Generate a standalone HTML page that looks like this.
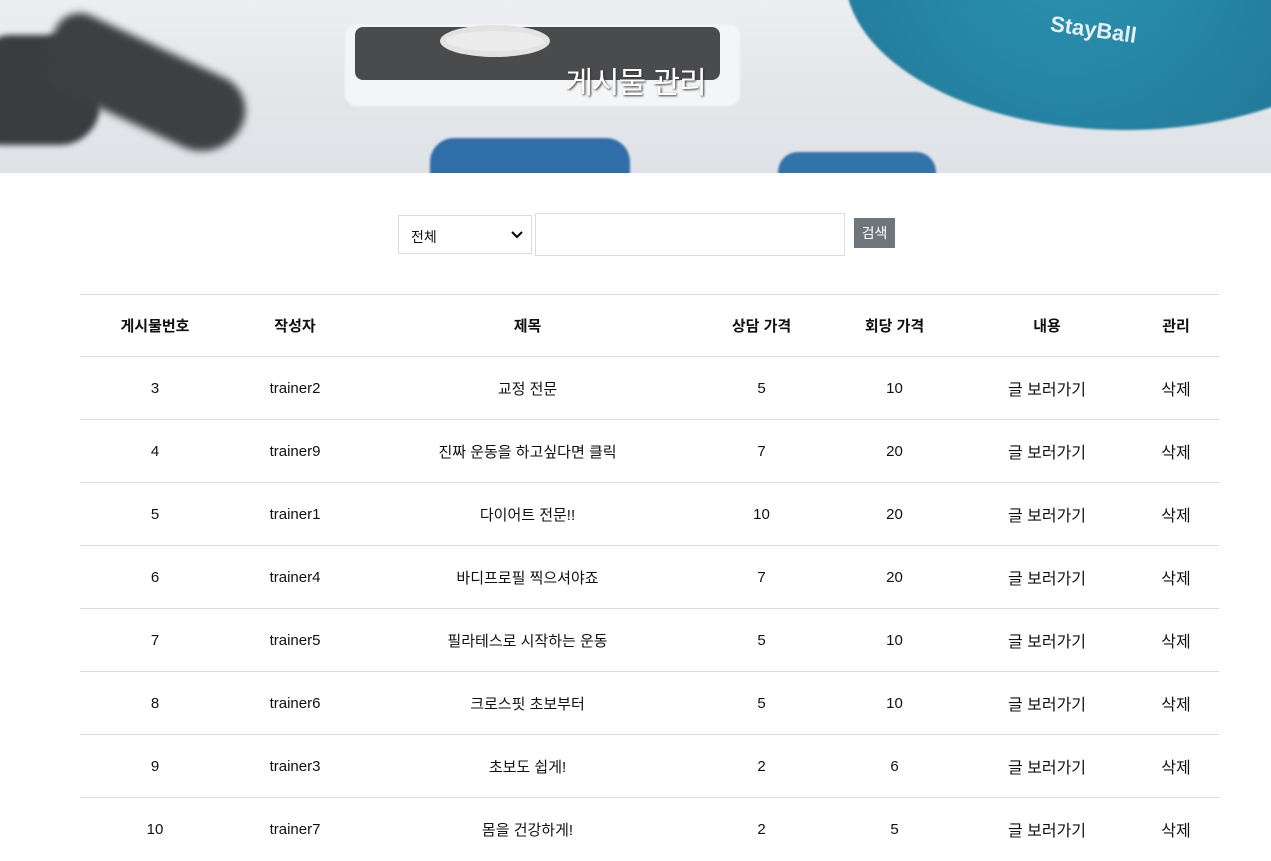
<!DOCTYPE html>
<html><head><meta charset="utf-8"><style>
*{margin:0;padding:0;box-sizing:border-box}
body{width:1271px;height:849px;overflow:hidden;background:#fff;font-family:"Liberation Sans","Noto Sans CJK KR",sans-serif;color:#111}
.hero{position:relative;height:173px;background:linear-gradient(180deg,#eceef0 0%,#e4e7ea 50%,#dfe2e6 100%);overflow:hidden}
.hero div{position:absolute}
.title{position:absolute;left:0;right:0;top:58px;text-align:center;color:#fff;font-size:30px;text-shadow:1px 1px 2px #333;letter-spacing:-1px}
.search{position:absolute;top:213px;left:398px}
.sel{position:absolute;left:0;top:2px;width:134px;height:39px;border:1px solid #ddd;font-size:14px;padding:11px 12px}
.sel svg{position:absolute;right:8px;top:15px}
.inp{position:absolute;left:137px;top:0;width:310px;height:43px;border:1px solid #ddd}
.btn{position:absolute;left:456px;top:5px;width:41px;height:30px;background:#70757c;color:#fff;font-size:14px;text-align:center;line-height:30px}
table{position:absolute;top:294px;left:80px;width:1139px;border-collapse:collapse}
td,th{border-top:1px solid #ddd;text-align:center;height:63px;font-size:15px;font-weight:normal}
th{font-weight:bold;height:62px}
td.b{font-size:16px}
</style></head><body>
<div class="hero">
 <div style="left:-20px;top:35px;width:120px;height:110px;background:#3a3c3f;border-radius:30px 50px 40px 20px;filter:blur(3px)"></div>
 <div style="left:40px;top:45px;width:210px;height:80px;background:#3d3f42;border-radius:30px 40px 50px 40px;filter:blur(4px);transform:rotate(25deg)"></div>
 <div style="left:345px;top:24px;width:395px;height:82px;background:#f4f5f6;border-radius:12px;filter:blur(1px)"></div>
 <div style="left:355px;top:27px;width:365px;height:53px;background:#4a4b4d;border-radius:8px"></div>
 <div style="left:440px;top:25px;width:110px;height:32px;background:#ececec;border-radius:50%;border:6px solid #e2e2e2"></div>
 <div style="left:845px;top:-180px;width:560px;height:310px;background:radial-gradient(circle at 40% 40%,#2b93b2,#1f6f8f);border-radius:50%;filter:blur(1px)"></div>
 <div style="left:1050px;top:17px;color:#e6eef2;font-weight:bold;font-size:22px;transform:rotate(8deg)">StayBall</div>
 <div style="left:430px;top:138px;width:200px;height:60px;background:#2f6ea8;border-radius:24px 24px 0 0;filter:blur(1px)"></div>
 <div style="left:778px;top:152px;width:158px;height:50px;background:#3273aa;border-radius:20px 20px 0 0;filter:blur(1px)"></div>
 <div class="title">게시물 관리</div>
</div>
<div class="search">
 <div class="sel">전체<svg width="12" height="8" viewBox="0 0 12 8"><path d="M1 1l5 5 5-5" stroke="#000" stroke-width="2" fill="none"/></svg></div>
 <div class="inp"></div>
 <div class="btn">검색</div>
</div>
<table>
<colgroup><col style="width:150px"><col style="width:130px"><col style="width:335px"><col style="width:133px"><col style="width:133px"><col style="width:172px"><col></colgroup>
<tr><th>게시물번호</th><th>작성자</th><th>제목</th><th>상담 가격</th><th>회당 가격</th><th>내용</th><th>관리</th></tr>
<tr><td>3</td><td>trainer2</td><td>교정 전문</td><td>5</td><td>10</td><td class="b">글 보러가기</td><td class="b">삭제</td></tr>
<tr><td>4</td><td>trainer9</td><td>진짜 운동을 하고싶다면 클릭</td><td>7</td><td>20</td><td class="b">글 보러가기</td><td class="b">삭제</td></tr>
<tr><td>5</td><td>trainer1</td><td>다이어트 전문!!</td><td>10</td><td>20</td><td class="b">글 보러가기</td><td class="b">삭제</td></tr>
<tr><td>6</td><td>trainer4</td><td>바디프로필 찍으셔야죠</td><td>7</td><td>20</td><td class="b">글 보러가기</td><td class="b">삭제</td></tr>
<tr><td>7</td><td>trainer5</td><td>필라테스로 시작하는 운동</td><td>5</td><td>10</td><td class="b">글 보러가기</td><td class="b">삭제</td></tr>
<tr><td>8</td><td>trainer6</td><td>크로스핏 초보부터</td><td>5</td><td>10</td><td class="b">글 보러가기</td><td class="b">삭제</td></tr>
<tr><td>9</td><td>trainer3</td><td>초보도 쉽게!</td><td>2</td><td>6</td><td class="b">글 보러가기</td><td class="b">삭제</td></tr>
<tr><td>10</td><td>trainer7</td><td>몸을 건강하게!</td><td>2</td><td>5</td><td class="b">글 보러가기</td><td class="b">삭제</td></tr>
</table>
</body></html>
